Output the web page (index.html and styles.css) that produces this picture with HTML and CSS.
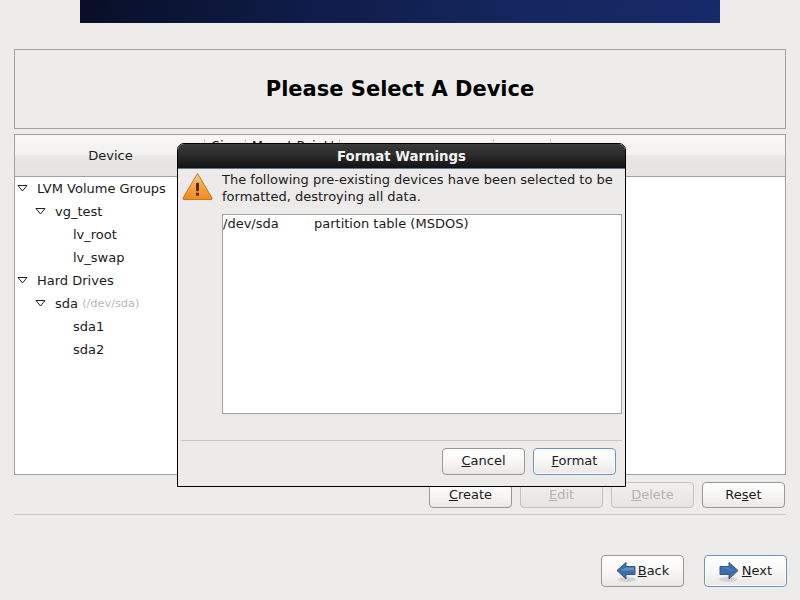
FILE: index.html
```html
<!DOCTYPE html>
<html lang="en">
<head>
<meta charset="utf-8">
<title>Please Select A Device</title>
<link rel="stylesheet" href="styles.css">
</head>
<body>
<div class="banner-row"><div class="banner"></div></div>
<main class="content">
  <section class="title-box"><h1>Please Select A Device</h1></section>
  <section class="tree-box">
    <div class="tree-head">
      <div class="col col-device">Device</div>
      <div class="col col-size">Size<br>(MB)</div>
      <div class="col col-mount">Mount Point/<br>RAID/Volume</div>
      <div class="col col-type"></div>
      <div class="col col-fmt"></div>
      <div class="col col-rest"></div>
    </div>
    <ul class="tree">
      <li class="node l0"><svg class="arrow" viewBox="0 0 11 7"><path d="M1 .5h9L5.5 6z"/></svg>LVM Volume Groups</li>
      <li class="node l1"><svg class="arrow" viewBox="0 0 11 7"><path d="M1 .5h9L5.5 6z"/></svg>vg_test</li>
      <li class="node l2">lv_root</li>
      <li class="node l2">lv_swap</li>
      <li class="node l0"><svg class="arrow" viewBox="0 0 11 7"><path d="M1 .5h9L5.5 6z"/></svg>Hard Drives</li>
      <li class="node l1"><svg class="arrow" viewBox="0 0 11 7"><path d="M1 .5h9L5.5 6z"/></svg>sda <small class="hint">(/dev/sda)</small></li>
      <li class="node l2">sda1</li>
      <li class="node l2">sda2</li>
    </ul>
  </section>
  <div class="actions">
    <button class="btn"><u>C</u>reate</button>
    <button class="btn" disabled><u>E</u>dit</button>
    <button class="btn" disabled><u>D</u>elete</button>
    <button class="btn">Re<u>s</u>et</button>
  </div>
  <hr class="rule">
  <div class="nav">
    <button class="btn nav-btn">
      <svg class="nav-icon" viewBox="0 0 20 22"><ellipse cx="11" cy="18.5" rx="9" ry="2.5" fill="#d4d3d1"/><path d="M1 9.500 10 1.500v4h9v8h-9V18z" fill="#3d6ea9" stroke="#2a5a98"/><path d="M10 6.500h8v3H4z" fill="#86a8d0" opacity=".6"/></svg><span><u>B</u>ack</span>
    </button>
    <button class="btn nav-btn focus">
      <svg class="nav-icon" viewBox="0 0 20 22"><ellipse cx="9" cy="18.500" rx="9" ry="2.500" fill="#d4d3d1"/><path d="M19 9.500 10 1.500v4H1v8h9V18z" fill="#3d6ea9" stroke="#2a5a98"/><path d="M2 6.500h8v3h6z" fill="#86a8d0" opacity=".6"/></svg><span><u>N</u>ext</span>
    </button>
  </div>
</main>
<div class="dialog" role="dialog">
  <div class="dialog-title">Format Warnings</div>
  <div class="dialog-body">
    <div class="message">
      <svg class="warn" viewBox="0 0 32 30">
        <defs><linearGradient id="wg" x1="0" y1="0" x2="0" y2="1"><stop offset="0" stop-color="#fbd09a"/><stop offset=".5" stop-color="#f6a445"/><stop offset="1" stop-color="#ee8a20"/></linearGradient></defs>
        <path d="M16 1.500 31 27q.5 1.500-1 1.500H2Q.500 28.500 1 27z" fill="url(#wg)" stroke="#c8701a" stroke-linejoin="round"/>
        <rect x="14.500" y="11" width="3" height="9" rx="1" fill="#4a2a08"/>
        <rect x="14.500" y="21.500" width="3" height="3" fill="#4a2a08"/>
      </svg>
      <p>The following pre-existing devices have been selected to be formatted, destroying all data.</p>
    </div>
    <div class="list">
      <span class="dev">/dev/sda</span><span>partition table (MSDOS)</span>
    </div>
  </div>
  <hr class="dialog-rule">
  <div class="dialog-actions">
    <button class="btn"><u>C</u>ancel</button>
    <button class="btn focus"><u>F</u>ormat</button>
  </div>
</div>
</body>
</html>
```
FILE: styles.css
```css
* { box-sizing: border-box; }
html, body { margin: 0; height: 100%; }
body {
  background: #edeceb;
  color: #1a1a1a;
  font: 13px/16px "DejaVu Sans", sans-serif;
  overflow: hidden;
  position: relative;
}
.banner-row { display: flex; justify-content: center; }
.banner {
  width: 640px;
  height: 23px;
  background: linear-gradient(100deg, #080f26 0%, #0f1c48 35%, #15275f 70%, #172a69 100%);
}
.content { padding: 26px 14px 0; }
.title-box {
  height: 80px;
  border: 1px solid #a3a19e;
  display: flex;
  align-items: center;
  justify-content: center;
}
h1 {
  margin: 0;
  font-size: 21px;
  line-height: 26px;
  font-weight: 700;
  color: #000;
}
.tree-box {
  margin-top: 5px;
  height: 341px;
  border: 1px solid #a3a19e;
  background: #fff;
}
.tree-head {
  display: flex;
  height: 42px;
  border-bottom: 1px solid #a3a19e;
  background: linear-gradient(#f8f7f5 0%, #f3f2f0 48%, #e8e7e5 52%, #e4e3e1 100%);
}
.col {
  display: flex;
  align-items: center;
  justify-content: center;
  text-align: center;
  border-right: 1px solid #c8c6c3;
  margin-top: 4px;
  height: 34px;
  white-space: nowrap;
}
.col-device { width: 190px; padding-left: 2px; }
.col-size { width: 41px; padding-bottom: 4px; }
.col-mount { width: 94px; padding-bottom: 4px; }
.col-type { width: 154px; }
.col-fmt { width: 57px; }
.col-rest { flex: 1; border-right: 0; }
.tree { list-style: none; margin: 0; padding: 0; }
.node { height: 23px; display: flex; align-items: center; white-space: pre; }
.l0 { padding-left: 2px; }
.l1 { padding-left: 20px; }
.l2 { padding-left: 58px; }
.arrow {
  width: 11px;
  height: 7px;
  margin-right: 9px;
  fill: #fff;
  stroke: #222;
  stroke-width: 1;
}
.hint { font-size: 11.3px; color: #b9b8b6; }
.actions { display: flex; justify-content: flex-end; gap: 8px; margin-top: 7px; padding-right: 1px; }
.btn {
  width: 83px;
  height: 27px;
  padding: 0 0 1px;
  font: inherit;
  color: #1a1a1a;
  border: 1px solid #9a9896;
  border-radius: 4px;
  background: linear-gradient(#fff 0%, #f8f7f6 50%, #e9e8e6 100%);
}
.actions .btn { height: 26px; padding-bottom: 0; }
.btn:disabled {
  color: #b5b4b2;
  border-color: #c4c2c0;
  background: linear-gradient(#f1f0ef, #e6e5e3);
}
.btn.focus { border-color: #6a94c6; box-shadow: inset 0 0 0 1px #fff; }
.rule { margin: 6px 0 0; border: 0; border-top: 1px solid #c8c6c3; }
.nav { display: flex; justify-content: flex-end; gap: 20px; margin: 40px -1px 0 0; }
.nav-btn { display: flex; align-items: center; justify-content: center; height: 32px; }
.nav-btn span { margin-left: 2px; }
.nav-btn.focus span { margin-left: 3px; }
.nav-icon { width: 20px; height: 22px; margin-top: 2px; }
.dialog {
  position: absolute;
  left: 177px;
  top: 143px;
  width: 449px;
  height: 344px;
  border: 1px solid #000;
  border-top-left-radius: 7px;
  border-top-right-radius: 7px;
  background: #ecebe9;
  display: flex;
  flex-direction: column;
}
.dialog-title {
  height: 25px;
  flex: none;
  border-radius: 6px 6px 0 0;
  background: linear-gradient(#3a3a3a, #2c2c2c 45%, #121212);
  border-bottom: 1px solid #5f7792;
  color: #f2f2f2;
  font-size: 13.33px;
  font-weight: 700;
  text-align: center;
  line-height: 25px;
}
.dialog-body { padding: 1px 3px 0 4px; flex: 1; }
.message { display: flex; align-items: flex-start; gap: 9px; height: 43px; }
.warn { width: 31px; height: 29px; flex: none; margin-top: 2px; }
.message p { margin: 1px 0 0; width: 400px; line-height: 17px; }
.list {
  margin: 1px 0 0 40px;
  height: 200px;
  border: 1px solid #a3a19e;
  background: #fff;
  display: flex;
  padding: 1px 0 0;
}
.dev { width: 91px; }
.dialog-rule { margin: 0 3px; border: 0; border-top: 1px solid #c8c6c3; }
.dialog-actions { display: flex; justify-content: flex-end; gap: 8px; padding: 7px 9px 11px 0; }
```
